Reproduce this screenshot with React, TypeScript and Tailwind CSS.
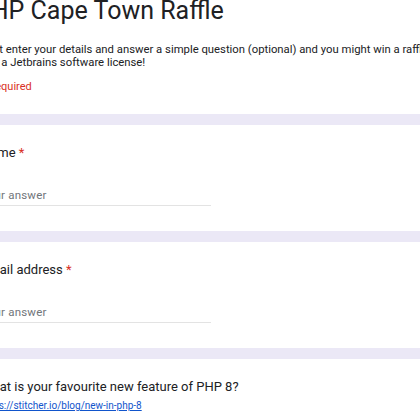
import React from "react";

const font = { fontFamily: "Roboto, 'Liberation Sans', sans-serif" };

function Question({ label }: { label: string }) {
  return (
    <div className="bg-white h-[106px] pt-[18px]">
      <div className="text-[13px] leading-[20px] text-[#202124] whitespace-nowrap">
        {label}
        <span className="text-[#d93025]"> *</span>
      </div>
      <div className="mt-[23px] w-[230px] border-b border-[#e3e3e3] pb-[1px] text-[11.5px] leading-[18px] text-[#70757a] tracking-[0.2px]">
        Your answer
      </div>
    </div>
  );
}

export default function App() {
  return (
    <div className="w-[420px] h-[420px] overflow-hidden bg-[#ebe8f6]" style={font}>
      <div className="ml-[-19px] w-[800px] flex flex-col gap-[11px]">
        <div className="bg-white h-[114px]">
          <div className="ml-[-6px] mt-[-3px] text-[25px] leading-[28px] text-[#202124] whitespace-nowrap">
            PHP Cape Town Raffle
          </div>
          <div className="mt-[18px] text-[11.3px] leading-[13px] text-[#202124] whitespace-nowrap">
            <div>Just enter your details and answer a simple question (optional) and you might win a raffle</div>
            <div>win a Jetbrains software license!</div>
          </div>
          <div className="mt-[10px] text-[11px] leading-[16px] text-[#d93025]">* Required</div>
        </div>
        <Question label="Name" />
        <Question label="Email address" />
        <div className="bg-white h-[106px] pt-[18px]">
          <div className="text-[13px] leading-[20px] text-[#202124] whitespace-nowrap">
            What is your favourite new feature of PHP 8?
          </div>
          <div className="mt-[2px] text-[10px] leading-[14px] whitespace-nowrap">
            <a className="text-[#1155cc] underline">https://stitcher.io/blog/new-in-php-8</a>
          </div>
        </div>
      </div>
    </div>
  );
}
